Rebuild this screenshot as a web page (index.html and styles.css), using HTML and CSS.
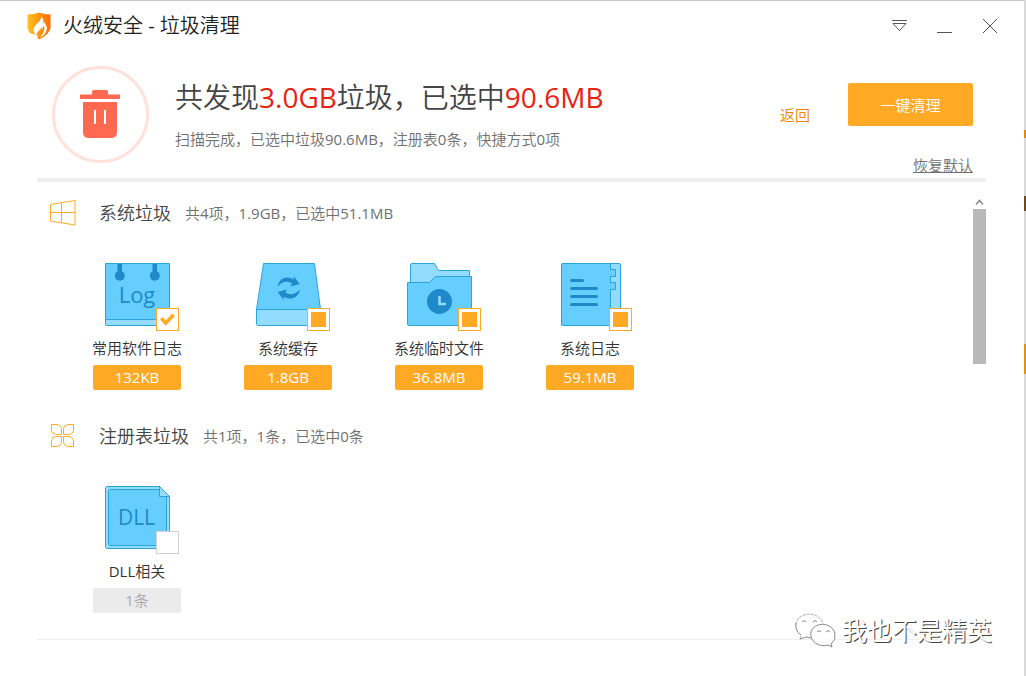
FILE: index.html
```html
<!DOCTYPE html>
<html lang="zh-CN">
<head>
<meta charset="utf-8">
<title>火绒安全 - 垃圾清理</title>
<link rel="stylesheet" href="styles.css">
</head>
<body>
<div class="window">
  <header class="titlebar">
    <svg class="logo" viewBox="0 0 24 28" aria-hidden="true">
      <defs>
        <linearGradient id="shield" x1="0" x2="1"><stop offset="0" stop-color="#ffc21f"/><stop offset="1" stop-color="#ff6a00"/></linearGradient>
      </defs>
      <path d="M0.5 2.5Q7 2.500 12 0.500Q17 2.500 23.500 2.500V16Q22 23 12 27.500Q2 23 0.500 16Z" fill="url(#shield)"/>
      <path d="M14 4C15 8 11 10 8 14C6 17 6 20 9 23L10 24C11 20 16 18 17 13C18 17 17 21 13 25C17 24 20 20 20 15C19 14 18 12 18 10L16.500 12C17 9 16 6 14 4Z" fill="#fff"/>
      <path d="M9 23C8 19 12 18 14 14C14 18 11 21 10.500 26L12 27.500Q6 25 3 21L6 22Z" fill="#fff"/>
      <path d="M9.500 22.500C10 19.500 13.500 18 15 14.500C15.500 19 11.500 21 11.500 25.500Z" fill="#ff9a0c"/>
    </svg>
    <h1 class="app-title">火绒安全 - 垃圾清理</h1>
    <div class="window-buttons">
      <button class="win-btn" type="button" aria-label="菜单"><svg viewBox="0 0 16 16"><path d="M0 2.500H15M1 5.500H14L7.500 12.500Z"/></svg></button>
      <button class="win-btn" type="button" aria-label="最小化"><svg viewBox="0 0 16 16"><path d="M0 14.500H15"/></svg></button>
      <button class="win-btn" type="button" aria-label="关闭"><svg viewBox="0 0 16 16"><path d="M1 1L15 15M15 1L1 15"/></svg></button>
    </div>
  </header>

  <main class="content">
    <section class="summary">
      <svg class="trash" viewBox="0 0 97 97" aria-hidden="true">
        <circle cx="48.500" cy="48.500" r="47" fill="none" stroke="#ffe0da" stroke-width="3"/>
        <path d="M28 28.500H40V26Q40 24 42 24H54Q56 24 56 26V28.500H68V33H28ZM31 36H65V66Q65 72 59 72H37Q31 72 31 66Z" fill="#ff6950"/>
        <path d="M43 44V58M53 44V58" stroke="#fff" stroke-width="2"/>
      </svg>
      <div class="summary-text">
        <h2 class="headline">共发现<em>3.0GB</em>垃圾，已选中<em>90.6MB</em></h2>
        <p class="detail">扫描完成，已选中垃圾90.6MB，注册表0条，快捷方式0项</p>
      </div>
      <a class="back" href="#">返回</a>
      <div class="actions">
        <button class="clean" type="button">一键清理</button>
        <a class="restore" href="#">恢复默认</a>
      </div>
    </section>

    <div class="panel">
      <div class="groups">
        <section class="group">
          <header class="group-head">
            <svg class="group-icon" viewBox="0 0 26 26" aria-hidden="true"><path d="M0.500 4.500L25 0.500V25L0.500 21ZM11.500 3V23M0.500 12.500H25"/></svg>
            <h3>系统垃圾</h3>
            <span>共4项，1.9GB，已选中51.1MB</span>
          </header>
          <ul class="items">
            <li class="item">
              <svg class="pic" viewBox="0 0 88 68" aria-hidden="true">
                <rect class="light line" x="12.500" y="0.500" width="64" height="62" rx="1"/>
                <path class="main line" d="M12.500 0.500H76.500V56.500H12.500Z"/>
                <path class="dark" d="M24.500 1H29V9H24.500ZM59.500 1H64V9H59.500Z"/>
                <circle class="dark" cx="26.800" cy="12.700" r="5"/><circle class="dark" cx="61.800" cy="12.700" r="5"/>
                <text class="pic-text" x="44" y="40">Log</text>
              </svg>
              <input class="tick" type="checkbox" id="soft-log" checked>
              <label for="soft-log">常用软件日志</label>
              <span class="size">132KB</span>
            </li>
            <li class="item">
              <svg class="pic" viewBox="0 0 88 68" aria-hidden="true">
                <path class="light line" d="M12.500 46.500H76.500V62.500H13.500L12.500 61.500Z"/>
                <path class="main line" d="M19.500 0.500H70.500L76.500 46.500H12.500Z"/>
                <g class="dark">
                  <path id="swap" d="M33.500 23.500C35 15 43 12 50 16.500L49.500 12.700L55.700 21L46.500 23.500L48 20.500C43 17.500 38 18.500 33.500 23.500Z"/>
                  <use href="#swap" transform="rotate(180 44.700 25)"/>
                </g>
              </svg>
              <input class="tick partial" type="checkbox" id="sys-cache" checked>
              <label for="sys-cache">系统缓存</label>
              <span class="size">1.8GB</span>
            </li>
            <li class="item">
              <svg class="pic" viewBox="0 0 88 68" aria-hidden="true">
                <path class="light line" d="M15.500 30V1.500L16.500 0.500H39.500L43.500 7.500H74.500V30Z"/>
                <path class="main line" d="M12.500 19.500H34.500L40.500 13.500H76.500V62.500H13.500L12.500 61.500Z"/>
                <circle class="dark" cx="44.500" cy="38.500" r="12.500"/>
                <path d="M44.500 33V41H51" fill="none" stroke="#93dbff" stroke-width="2.500"/>
              </svg>
              <input class="tick partial" type="checkbox" id="sys-temp" checked>
              <label for="sys-temp">系统临时文件</label>
              <span class="size">36.8MB</span>
            </li>
            <li class="item">
              <svg class="pic" viewBox="0 0 88 68" aria-hidden="true">
                <rect class="light line" x="15.500" y="0.500" width="59" height="62" rx="1"/>
                <path class="main line" d="M16.500 0.500H64.500V6.500H69.500V13.500H64.500V19.500H69.500V26.500H64.500V62.500H16.500L15.500 61.500V1.500Z"/>
                <path d="M25.500 17.500H36.500M25.500 25.500H50.500M25.500 33.500H50.500M25.500 41.500H50.500" fill="none" stroke="#1e8ac9" stroke-width="3" stroke-linecap="round"/>
              </svg>
              <input class="tick partial" type="checkbox" id="sys-log" checked>
              <label for="sys-log">系统日志</label>
              <span class="size">59.1MB</span>
            </li>
          </ul>
        </section>

        <section class="group">
          <header class="group-head">
            <svg class="group-icon" viewBox="0 0 26 26" aria-hidden="true">
              <path d="M1.500 1.500H6Q11.500 1.500 11.500 7V11.500H7Q1.500 11.500 1.500 6ZM23.500 1.500H19Q13.500 1.500 13.500 7V11.500H18Q23.500 11.500 23.500 6ZM1.500 23.500H6Q11.500 23.500 11.500 18V13.500H7Q1.500 13.500 1.500 19ZM23.500 23.500H19Q13.500 23.500 13.500 18V13.500H18Q23.500 13.500 23.500 19Z"/>
            </svg>
            <h3>注册表垃圾</h3>
            <span>共1项，1条，已选中0条</span>
          </header>
          <ul class="items">
            <li class="item">
              <svg class="pic" viewBox="0 0 88 68" aria-hidden="true">
                <path class="light line" d="M13.500 0.500H66.500L76.500 10.500V62.500H13.500L12.500 61.500V1.500Z"/>
                <path class="main line" d="M16.500 3.500H66.500V10.500H73.500V59.500H16.500L15.500 58.500V4.500Z"/>
                <path class="light line" d="M66.500 0.500V10.500H76.500Z"/>
                <text class="pic-text bold" x="43.500" y="39">DLL</text>
              </svg>
              <input class="tick" type="checkbox" id="dll">
              <label for="dll">DLL相关</label>
              <span class="size idle">1条</span>
            </li>
          </ul>
        </section>
      </div>
      <div class="scrollbar" aria-hidden="true">
        <svg viewBox="0 0 13 8"><path d="M3 6.500L6.500 2.500L10 6.500"/></svg>
        <div class="thumb"></div>
      </div>
    </div>
  </main>

  <div class="watermark">
    <svg viewBox="0 0 42 36" aria-hidden="true">
      <path d="M5 26L6 22C-2 16 0 5 9 2C18 -1 27 4 28 11" stroke="#aaa" stroke-dasharray="3 1"/>
      <path d="M5 26L11 24L16 25M1 10Q0 18 6 22"/>
      <path d="M36 31Q41 27 40 21C38 9 19 8 16 19C14 28 24 35 33 32L37 34Z"/>
      <path d="M7 9Q9 6 11 9M18 9Q20 6 22 9M22 19Q24 16 26 19M31 19Q33 16 35 19"/>
    </svg>
    <span>我也不是精英</span>
  </div>
</div>
<div class="edge"></div>
</body>
</html>
```
FILE: styles.css
```css
* { box-sizing: border-box; }

body {
  margin: 0;
  min-height: 100vh;
  display: flex;
  background: #fff;
  color: #444;
  font: 15px/20px "Open Sans", "Noto Sans CJK SC DemiLight", "Noto Sans CJK SC Light", "Noto Sans CJK SC", sans-serif;
}

h1, h2, h3, p, ul { margin: 0; padding: 0; font-weight: inherit; }
button { border: 0; padding: 0; font: inherit; cursor: pointer; }
svg { display: block; }

.window {
  position: relative;
  flex: 1;
  display: flex;
  flex-direction: column;
  border-top: 1px solid #c6c6c6;
}

/* Sliver of the desktop behind the window */
.edge {
  width: 2px;
  background: linear-gradient(#d8d8d8 130px, #d98a1c 130px 138px, #d8d8d8 138px 196px, #6b4a20 196px 211px, #d8d8d8 211px 344px, #d9921c 344px 374px, #d8d8d8 374px);
}

.titlebar {
  display: flex;
  align-items: center;
  height: 50px;
  padding: 0 26px 0 27px;
}
.logo { width: 24px; height: 28px; }
.app-title { margin-left: 12px; font-size: 20px; line-height: 28px; color: #222; }
.window-buttons { display: flex; gap: 29px; margin-left: auto; }
.win-btn { width: 16px; height: 16px; background: none; }
.win-btn svg { width: 16px; height: 16px; fill: none; stroke: #555; }

.content {
  flex: 1;
  display: flex;
  flex-direction: column;
  margin: 0 38px 36px 37px;
  border-bottom: 1px solid #eee;
}

.summary {
  display: flex;
  height: 131px;
  padding: 15px 13px 0 15px;
  border-bottom: 4px solid #efefef;
}
.trash { width: 97px; height: 97px; flex: none; }
.summary-text { flex: 1; margin-left: 26px; padding-top: 11px; white-space: nowrap; }
.headline { font-size: 28px; line-height: 40px; }
.headline em { font-style: normal; color: #e62310; }
.detail { margin-top: 12px; color: #707070; }
.back { margin: 39px 38px 0 0; color: #f08300; text-decoration: none; }
.actions { display: flex; flex-direction: column; align-items: flex-end; padding-top: 17px; }
.clean { width: 125px; height: 43px; border-radius: 2px; background: #ffa924; color: #fff; }
.restore { margin-top: 29px; color: #707070; }

.panel { flex: 1; display: flex; padding-top: 16px; }
.groups { flex: 1; }
.group { padding-bottom: 31px; }
.group:last-child { padding-bottom: 26px; }
.group-head { display: flex; align-items: center; height: 30px; padding-left: 13px; }
.group-icon { width: 26px; height: 26px; fill: none; stroke: #ffaa2b; }
.group-head h3 { margin-left: 23px; font-size: 18px; line-height: 26px; }
.group-head span { margin-left: 14px; color: #707070; }

.items { display: flex; gap: 63px; padding: 35px 0 0 56px; list-style: none; }
.item {
  position: relative;
  width: 88px;
  display: flex;
  flex-direction: column;
  align-items: center;
  white-space: nowrap;
}
.pic { width: 88px; height: 68px; }
.light { fill: #93dbff; }
.main { fill: #65ceff; }
.line { stroke: #2aa5dc; }
.dark { fill: #1e8ac9; }
.pic-text { fill: #1e8ac9; font-size: 22px; font-weight: 500; text-anchor: middle; }
.pic-text.bold { font-size: 21px; font-weight: 500; }

.tick {
  position: absolute;
  left: 63px;
  top: 45px;
  display: grid;
  place-items: center;
  width: 23px;
  height: 23px;
  margin: 0;
  appearance: none;
  border: 1px solid #d0d0d0;
  background: #fff;
}
.tick:checked { border-color: #ffa924; }
.tick:checked::before {
  content: "";
  width: 15px;
  height: 15px;
  background: #ffa924;
  clip-path: polygon(0 50%, 18% 34%, 38% 56%, 82% 10%, 100% 26%, 38% 92%);
}
.tick.partial::before { clip-path: none; }

.item label { margin-top: 7px; color: #333; }
.size {
  width: 88px;
  height: 25px;
  margin-top: 7px;
  border-radius: 2px;
  background: #ffa924;
  color: #fff;
  line-height: 25px;
  text-align: center;
}
.size.idle { background: #ebebeb; color: #aaa; }

.scrollbar { width: 13px; }
.scrollbar svg { width: 13px; height: 8px; fill: none; stroke: #888; stroke-width: 1.5; }
.thumb { height: 155px; margin-top: 3px; background: #b8b8b8; }

/* Floats over the bottom corner of the window */
.watermark {
  position: absolute;
  right: 32px;
  bottom: 27px;
  display: flex;
  align-items: flex-start;
  gap: 5px;
  color: #fff;
  font-family: "Noto Sans CJK SC", sans-serif;
  font-size: 25px;
  line-height: 32px;
  text-shadow: 1px 1px 0 #444;
}
.watermark svg { width: 42px; height: 36px; fill: #fff; stroke: #888; }
```
